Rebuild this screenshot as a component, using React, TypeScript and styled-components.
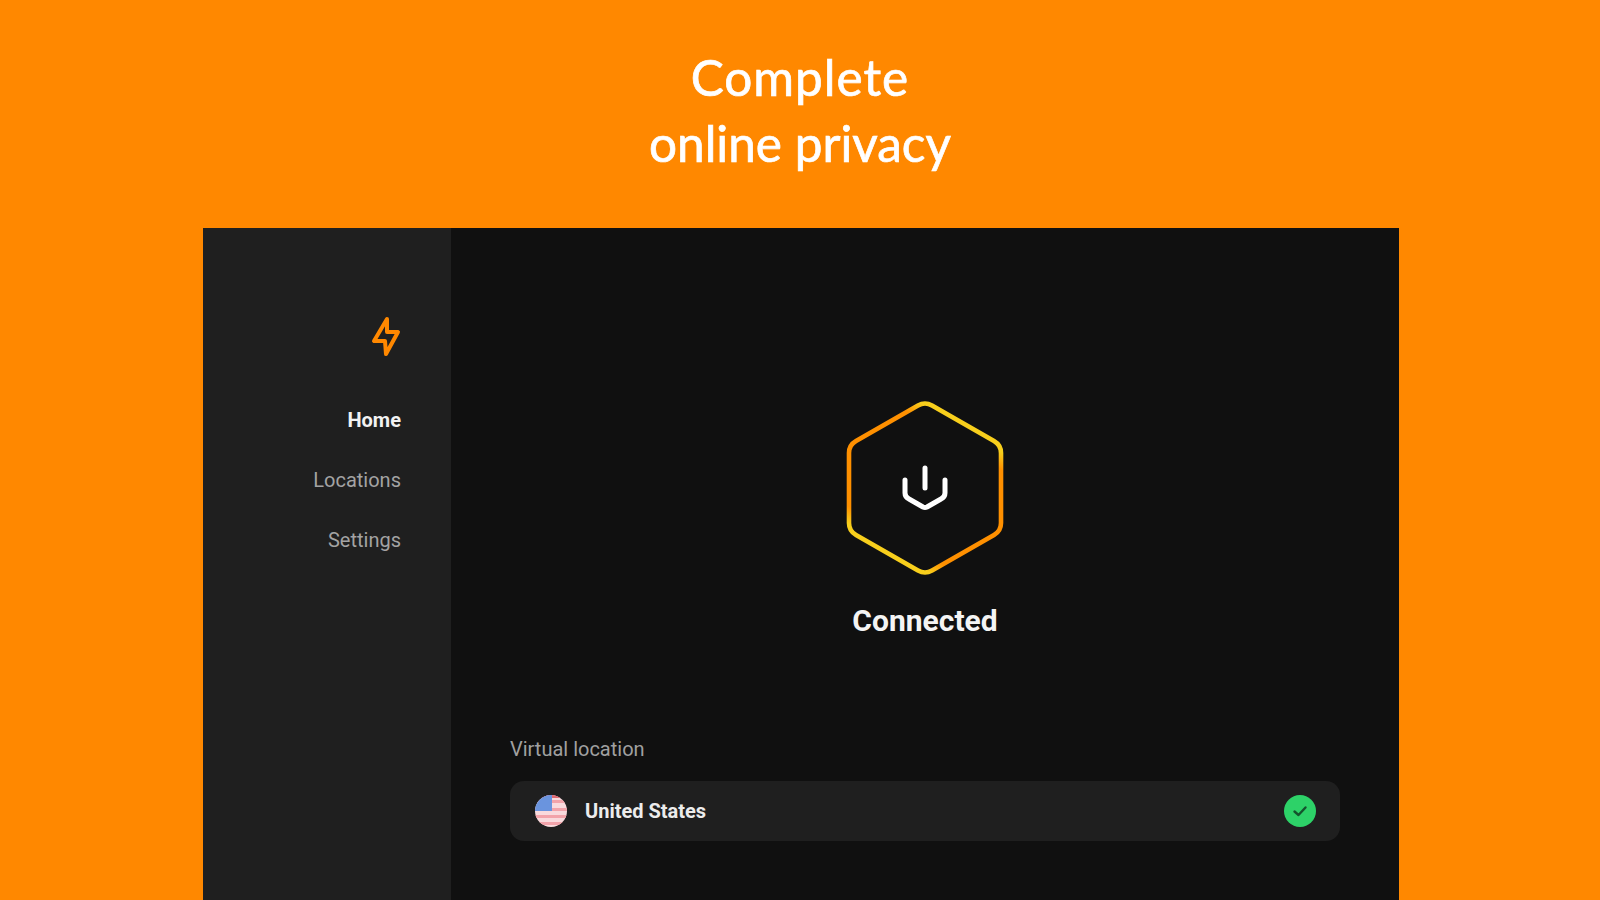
import React from 'react';
import styled, { createGlobalStyle } from 'styled-components';

const GlobalStyle = createGlobalStyle`
  html, body {
    margin: 0;
    height: 100%;
    background: #ff8800;
  }
  #root {
    height: 100%;
  }
`;

const Page = styled.div`
  width: 1600px;
  height: 900px;
  overflow: hidden;
  display: flex;
  flex-direction: column;
  align-items: center;
  background: #ff8800;
`;

const Title = styled.h1`
  margin: 0;
  padding: 44px 0 52px;
  font-family: Lato, 'Open Sans', sans-serif;
  font-size: 49.5px;
  font-weight: 400;
  line-height: 66px;
  -webkit-text-stroke: 0.7px #fff;
  color: #fff;
  text-align: center;
`;

const TitleLine = styled.span<{ $spacing?: number }>`
  display: block;
  letter-spacing: ${(p) => p.$spacing ?? 0}px;
`;

const Window = styled.div`
  width: 1196px;
  height: 672px;
  flex: none;
  margin-left: 2px;
  display: flex;
  background: #101010;
  font-family: Roboto, 'Liberation Sans', sans-serif;
`;

const Sidebar = styled.nav`
  width: 248px;
  box-sizing: border-box;
  padding: 88px 50px 0 0;
  display: flex;
  flex-direction: column;
  align-items: flex-end;
  background: #1f1f1f;
`;

const Bolt = styled.svg`
  display: block;
  width: 30px;
  height: 42px;
  margin-bottom: 50px;
`;

const NavItem = styled.a<{ $active?: boolean }>`
  height: 60px;
  font-size: 20px;
  line-height: 24px;
  font-weight: ${(p) => (p.$active ? 700 : 400)};
  color: ${(p) => (p.$active ? '#f2f2f2' : '#a3a3a3')};
`;

const Main = styled.main`
  flex: 1;
  box-sizing: border-box;
  padding: 172px 59px 0;
  display: flex;
  flex-direction: column;
`;

const Status = styled.div`
  display: flex;
  flex-direction: column;
  align-items: center;
`;

const Hexagon = styled.button`
  position: relative;
  width: 158px;
  height: 176px;
  padding: 0;
  border: 0;
  background: none;
  display: flex;
  align-items: center;
  justify-content: center;
`;

const HexagonOutline = styled.svg`
  position: absolute;
  inset: 0;
  width: 158px;
  height: 176px;
`;

const PowerIcon = styled.svg`
  position: relative;
  width: 46px;
  height: 46px;
`;

const StatusLabel = styled.div`
  margin-top: 27px;
  font-size: 30px;
  line-height: 36px;
  font-weight: 700;
  color: #f4f4f4;
`;

const SectionLabel = styled.div`
  margin-top: 98px;
  font-size: 20px;
  line-height: 24px;
  color: #a0a0a0;
`;

const LocationRow = styled.div`
  margin-top: 20px;
  height: 60px;
  box-sizing: border-box;
  padding: 0 24px 0 25px;
  display: flex;
  align-items: center;
  border-radius: 14px;
  background: #1f1f1f;
`;

const Flag = styled.svg`
  width: 32px;
  height: 32px;
  flex: none;
`;

const LocationName = styled.span`
  flex: 1;
  margin-left: 18px;
  font-size: 20px;
  font-weight: 700;
  color: #ececec;
`;

const CheckBadge = styled.svg`
  width: 32px;
  height: 32px;
  flex: none;
`;

function Flash() {
  return (
    <Bolt viewBox="0 0 30 42" fill="none">
      <path
        d="M16 3 L3 25 L14 25 L15 38 L27 16 L16 16 Z"
        stroke="#ff8800"
        strokeWidth="4"
        strokeLinejoin="round"
      />
    </Bolt>
  );
}

function PowerHexagon() {
  return (
    <Hexagon>
      <HexagonOutline viewBox="0 0 158 176" fill="none">
        <defs>
          <linearGradient id="hexStroke" gradientUnits="userSpaceOnUse" x1="118" y1="24" x2="40" y2="152">
            <stop offset="0.03" stopColor="#f8cf1c" />
            <stop offset="0.13" stopColor="#ff9000" />
            <stop offset="0.87" stopColor="#ff9000" />
            <stop offset="0.97" stopColor="#f8cf1c" />
          </linearGradient>
        </defs>
        <path
          d="M72 5.5 Q79 1.5 86 5.5 L148 41 Q155 45 155 53 L155 123 Q155 131 148 135 L86 170.5 Q79 174.5 72 170.5 L10 135 Q3 131 3 123 L3 53 Q3 45 10 41 Z"
          stroke="url(#hexStroke)"
          strokeWidth="4.6"
        />
      </HexagonOutline>
      <PowerIcon viewBox="0 0 46 46" fill="none" stroke="#fff" strokeWidth="5" strokeLinecap="round" strokeLinejoin="round">
        <path d="M23 3 L23 23" />
        <path d="M3 15 L3 28 Q3 32 7 34 L21 42 Q23 43 25 42 L39 34 Q43 32 43 28 L43 15" />
      </PowerIcon>
    </Hexagon>
  );
}

function UsFlag() {
  return (
    <Flag viewBox="0 0 32 32">
      <defs>
        <clipPath id="flagCircle">
          <circle cx="16" cy="16" r="16" />
        </clipPath>
      </defs>
      <g clipPath="url(#flagCircle)">
        <rect width="32" height="32" fill="#f9dadd" />
        <rect y="5" width="32" height="3" fill="#f2a3aa" />
        <rect y="13" width="32" height="3" fill="#f2a3aa" />
        <rect y="20" width="32" height="3" fill="#f2a3aa" />
        <rect y="27" width="32" height="3" fill="#f2a3aa" />
        <rect width="32" height="3" fill="#e06a72" />
        <rect width="17" height="16" fill="#6a94de" />
      </g>
    </Flag>
  );
}

function ConnectedCheck() {
  return (
    <CheckBadge viewBox="0 0 32 32" fill="none">
      <circle cx="16" cy="16" r="16" fill="#2dd268" />
      <path d="M10.5 16.5 L14.5 20 L21.5 12.5" stroke="#14532d" strokeWidth="2.4" strokeLinecap="round" strokeLinejoin="round" />
    </CheckBadge>
  );
}

export default function App() {
  return (
    <Page>
      <GlobalStyle />
      <Title>
        <TitleLine $spacing={1}>Complete</TitleLine>
        <TitleLine>online privacy</TitleLine>
      </Title>
      <Window>
        <Sidebar>
          <Flash />
          <NavItem $active>Home</NavItem>
          <NavItem>Locations</NavItem>
          <NavItem>Settings</NavItem>
        </Sidebar>
        <Main>
          <Status>
            <PowerHexagon />
            <StatusLabel>Connected</StatusLabel>
          </Status>
          <SectionLabel>Virtual location</SectionLabel>
          <LocationRow>
            <UsFlag />
            <LocationName>United States</LocationName>
            <ConnectedCheck />
          </LocationRow>
        </Main>
      </Window>
    </Page>
  );
}
